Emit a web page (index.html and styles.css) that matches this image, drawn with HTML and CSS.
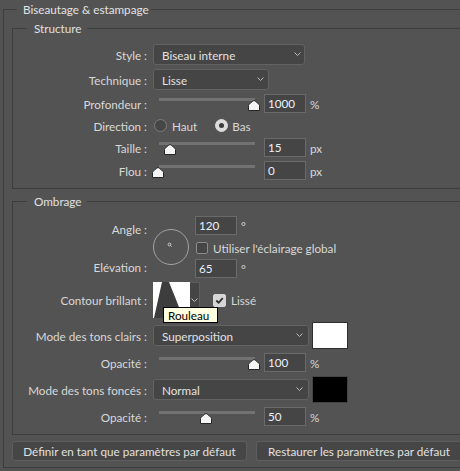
FILE: index.html
```html
<!DOCTYPE html>
<html lang="fr">
<head>
<meta charset="utf-8">
<title>Biseautage &amp; estampage</title>
<link rel="stylesheet" href="styles.css">
</head>
<body>
<fieldset class="outer">
  <legend class="title">Biseautage &amp; estampage</legend>

  <fieldset class="group structure">
    <legend class="group-title">Structure</legend>

    <div class="row h21 r-style">
      <div class="lbl">Style :</div>
      <div class="select w-style"><span>Biseau interne</span><svg class="chev" viewBox="0 0 7 5"><path d="M0.5 0.5 L3.5 3.5 L6.5 0.5" fill="none" stroke="#bdbdbd"/></svg></div>
    </div>

    <div class="row h21 r-tech">
      <div class="lbl">Technique :</div>
      <div class="select w-tech"><span>Lisse</span><svg class="chev" viewBox="0 0 7 5"><path d="M0.5 0.5 L3.5 3.5 L6.5 0.5" fill="none" stroke="#bdbdbd"/></svg></div>
    </div>

    <div class="row h19 r-prof">
      <div class="lbl">Profondeur :</div>
      <div class="slider"><div class="track"></div><svg class="thumb" style="left:95px" viewBox="0 0 12 11"><path d="M6 0.5 C7 0.5 11.5 4.5 11.5 5.5 V10.5 H0.5 V5.5 C0.5 4.5 5 0.5 6 0.5 Z" fill="#f4f4f4" stroke="#262626"/></svg></div>
      <div class="num">1000</div><span class="unit">%</span>
    </div>

    <div class="row h19 r-dir">
      <div class="lbl">Direction :</div>
      <span class="radio r-first"></span><span class="opt">Haut</span>
      <span class="radio on r-second"></span><span class="opt opt2">Bas</span>
    </div>

    <div class="row h19 r-taille">
      <div class="lbl">Taille :</div>
      <div class="slider"><div class="track"></div><svg class="thumb" style="left:11px" viewBox="0 0 12 11"><path d="M6 0.5 C7 0.5 11.5 4.5 11.5 5.5 V10.5 H0.5 V5.5 C0.5 4.5 5 0.5 6 0.5 Z" fill="#f4f4f4" stroke="#262626"/></svg></div>
      <div class="num">15</div><span class="unit">px</span>
    </div>

    <div class="row h19 r-flou">
      <div class="lbl">Flou :</div>
      <div class="slider"><div class="track"></div><svg class="thumb" style="left:-1px" viewBox="0 0 12 11"><path d="M6 0.5 C7 0.5 11.5 4.5 11.5 5.5 V10.5 H0.5 V5.5 C0.5 4.5 5 0.5 6 0.5 Z" fill="#f4f4f4" stroke="#262626"/></svg></div>
      <div class="num">0</div><span class="unit">px</span>
    </div>
  </fieldset>

  <fieldset class="group ombrage">
    <legend class="group-title">Ombrage</legend>

    <div class="angle-block">
      <div class="lbl-col">
        <div class="lbl lbl-angle">Angle :</div>
        <div class="lbl lbl-elev">Elévation :</div>
      </div>
      <svg class="dial" viewBox="0 0 36 36">
        <circle cx="18" cy="18" r="17.5" fill="none" stroke="#a3a3a3"/>
        <circle cx="16.5" cy="15.5" r="1.4" fill="none" stroke="#cfcfcf"/>
        <path d="M17.5 16.5 L18.5 17.5" stroke="#cfcfcf"/>
      </svg>
      <div class="right-col">
        <div class="mini-row m1"><div class="num nm">120</div><span class="unit">°</span></div>
        <div class="mini-row m2"><span class="check"></span><span class="cb-text">Utiliser l'éclairage global</span></div>
        <div class="mini-row m3"><div class="num nm">65</div><span class="unit">°</span></div>
      </div>
    </div>

    <div class="row r-contour">
      <div class="lbl">Contour brillant :</div>
      <div class="contour-pick">
        <svg class="contour-img" viewBox="0 0 37 36"><rect width="37" height="36" fill="#ffffff"/><path d="M9 0 L16 0 C20 10 25 22 30 36 L1 36 Z" fill="#3d3d3d"/></svg>
        <div class="contour-arrow"><svg class="chev" viewBox="0 0 7 5"><path d="M0.5 0.5 L3.5 3.5 L6.5 0.5" fill="none" stroke="#bdbdbd"/></svg></div>
      </div>
      <span class="check on c-lisse"><svg viewBox="0 0 12 12"><path d="M2.5 6 L5 8.5 L9.5 3.5" fill="none" stroke="#2e2e2e" stroke-width="2"/></svg></span><span class="cb-text">Lissé</span>
      <div class="tooltip">Rouleau</div>
    </div>

    <div class="row h27 r-clairs">
      <div class="lbl">Mode des tons clairs :</div>
      <div class="select w-mode"><span>Superposition</span><svg class="chev" viewBox="0 0 7 5"><path d="M0.5 0.5 L3.5 3.5 L6.5 0.5" fill="none" stroke="#bdbdbd"/></svg></div>
      <div class="swatch white"></div>
    </div>

    <div class="row h19 r-op1">
      <div class="lbl">Opacité :</div>
      <div class="slider"><div class="track"></div><svg class="thumb" style="left:95px" viewBox="0 0 12 11"><path d="M6 0.5 C7 0.5 11.5 4.5 11.5 5.5 V10.5 H0.5 V5.5 C0.5 4.5 5 0.5 6 0.5 Z" fill="#f4f4f4" stroke="#262626"/></svg></div>
      <div class="num">100</div><span class="unit">%</span>
    </div>

    <div class="row h27 r-fonces">
      <div class="lbl">Mode des tons foncés :</div>
      <div class="select w-mode"><span>Normal</span><svg class="chev" viewBox="0 0 7 5"><path d="M0.5 0.5 L3.5 3.5 L6.5 0.5" fill="none" stroke="#bdbdbd"/></svg></div>
      <div class="swatch black"></div>
    </div>

    <div class="row h19 r-op2">
      <div class="lbl">Opacité :</div>
      <div class="slider"><div class="track"></div><svg class="thumb" style="left:47px" viewBox="0 0 12 11"><path d="M6 0.5 C7 0.5 11.5 4.5 11.5 5.5 V10.5 H0.5 V5.5 C0.5 4.5 5 0.5 6 0.5 Z" fill="#f4f4f4" stroke="#262626"/></svg></div>
      <div class="num">50</div><span class="unit">%</span>
    </div>
  </fieldset>

  <div class="buttons">
    <div class="btn btn1">Définir en tant que paramètres par défaut</div>
    <div class="btn btn2">Restaurer les paramètres par défaut</div>
  </div>
</fieldset>
</body>
</html>
```
FILE: styles.css
```css
html, body {
  margin: 0;
  padding: 0;
  overflow: hidden;
}
body {
  background: #535353;
  width: 460px;
  height: 471px;
  font-family: Lato, "Liberation Sans", sans-serif;
  font-size: 11.7px;
  color: #d8d8d8;
}
legend {
  line-height: 16px;
  height: 16px;
  padding: 0;
}
.outer {
  margin: 1px 0 0 3px;
  padding: 3px 0 6px 8px;
  border: 1px solid #3d3d3d;
  border-right: none;
  width: 449px;
  min-width: 0;
}
.title {
  margin-left: 5px;
  padding: 0 2px 0 6px;
  color: #e2e2e2;
}
.group {
  margin: 0;
  padding: 0 0 8px 0;
  border: 1px solid #3d3d3d;
  border-right: none;
  width: 448px;
  min-width: 0;
}
.group-title {
  margin-left: 14px;
  padding: 0 5px 0 7px;
  color: #e0e0e0;
}
.ombrage {
  margin-top: 4px;
}
.row {
  display: flex;
  align-items: center;
}
.h21 { height: 21px; }
.h19 { height: 19px; }
.h27 { height: 27px; }
.r-style { margin-top: 8px; }
.r-tech { margin-top: 4px; }
.r-prof { margin-top: 4px; }
.r-dir { margin-top: 3px; }
.r-taille { margin-top: 3px; }
.r-flou { margin-top: 4px; }

.lbl {
  width: 134px;
  margin-right: 6px;
  text-align: right;
  flex: none;
  line-height: 16px;
  white-space: nowrap;
}
.select {
  box-sizing: border-box;
  height: 21px;
  background: #454545;
  border: 1px solid #626262;
  border-radius: 3px;
  display: flex;
  align-items: center;
  justify-content: space-between;
  padding: 0 3px 0 8px;
  color: #e2e2e2;
  flex: none;
}
.w-style { width: 152px; }
.w-tech { width: 116px; padding-right: 4px; }
.w-mode { width: 156px; padding-right: 5px; }
.chev {
  width: 7px;
  height: 5px;
  display: block;
}
.slider {
  position: relative;
  width: 107px;
  height: 19px;
  flex: none;
}
.track {
  margin: 4px 0 0 6px;
  width: 96px;
  height: 3px;
  background: #727272;
}
.thumb {
  position: absolute;
  top: 6px;
  width: 12px;
  height: 11px;
  display: block;
}
.num {
  box-sizing: border-box;
  width: 42px;
  height: 19px;
  margin-left: 4px;
  background: #454545;
  border: 1px solid #6a6a6a;
  padding-left: 3px;
  line-height: 17px;
  color: #eaf0fa;
  flex: none;
}
.unit {
  margin-left: 4px;
}
.radio {
  box-sizing: border-box;
  width: 13px;
  height: 13px;
  border-radius: 50%;
  border: 1px solid #7c7c7c;
  background: #464646;
  flex: none;
}
.r-first { margin-left: 1px; }
.radio.on {
  background: #dcdcdc;
  border-color: #dcdcdc;
  display: flex;
  align-items: center;
  justify-content: center;
}
.radio.on::after {
  content: "";
  width: 5px;
  height: 5px;
  border-radius: 50%;
  background: #3a3a3a;
}
.opt { margin-left: 5px; }
.r-second { margin-left: 18px; }
.opt2 { margin-left: 4px; }

.angle-block {
  display: flex;
  height: 62px;
  margin-top: 7px;
}
.lbl-col {
  width: 134px;
  margin-right: 6px;
  display: flex;
  flex-direction: column;
  flex: none;
}
.lbl-col .lbl { margin-right: 0; }
.lbl-angle { margin-top: 5px; }
.lbl-elev { margin-top: 22px; }
.dial {
  width: 36px;
  height: 36px;
  align-self: center;
  display: block;
  flex: none;
}
.right-col {
  margin-left: 6px;
  display: flex;
  flex-direction: column;
}
.mini-row {
  display: flex;
  align-items: center;
}
.m1 { height: 19px; }
.m2 { height: 17px; margin-top: 4px; }
.m3 { height: 19px; margin-top: 3px; }
.nm { margin-left: 0; }
.check {
  box-sizing: border-box;
  width: 12px;
  height: 12px;
  border: 1px solid #8a8a8a;
  border-radius: 2px;
  background: #464646;
  flex: none;
  margin-left: 1px;
}
.check.on {
  background: #d6d6d6;
  border-color: #d6d6d6;
  width: 13px;
  height: 13px;
}
.check svg {
  display: block;
  width: 11px;
  height: 11px;
}
.cb-text { margin-left: 5px; }

.r-contour {
  position: relative;
  height: 36px;
  margin-top: 4px;
}
.contour-pick {
  display: flex;
  width: 47px;
  height: 36px;
  flex: none;
}
.contour-img {
  width: 37px;
  height: 36px;
  display: block;
}
.contour-arrow {
  box-sizing: border-box;
  width: 10px;
  height: 36px;
  background: #454545;
  border: 1px solid #5e5e5e;
  border-left: none;
  display: flex;
  align-items: center;
  justify-content: center;
}
.c-lisse { margin-left: 13px; }
.tooltip {
  position: absolute;
  left: 150px;
  top: 25px;
  box-sizing: border-box;
  width: 55px;
  height: 16px;
  border: 1px solid #000;
  background: #ffffe1;
  color: #000;
  padding-left: 4px;
  line-height: 14px;
}
.r-clairs { margin-top: 4px; }
.r-op1 { margin-top: 4px; }
.r-fonces { margin-top: 4px; }
.r-op2 { margin-top: 4px; }
.swatch {
  box-sizing: border-box;
  width: 36px;
  height: 27px;
  margin-left: 3px;
  flex: none;
}
.white { background: #fff; border: 1px solid #2e2e2e; }
.black { background: #000; border: 1px solid #444; }

.buttons {
  display: flex;
  gap: 9px;
  margin-top: 6px;
}
.btn {
  box-sizing: border-box;
  height: 20px;
  border: 1px solid #5d5d5d;
  border-radius: 3px;
  background: #464646;
  display: flex;
  align-items: center;
  justify-content: center;
  flex: none;
  color: #e0e0e0;
  white-space: nowrap;
}
.btn1 { width: 235px; }
.btn2 {
  width: 204px;
  border-right: none;
  border-radius: 3px 0 0 3px;
  padding-left: 1px;
}
```
